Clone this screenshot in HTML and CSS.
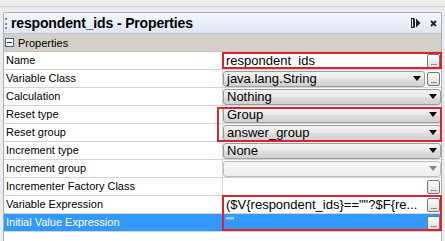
FILE: index.html
```html
<!DOCTYPE html>
<html lang="en">
<head>
    <meta charset="UTF-8">
    <meta name="viewport" content="width=device-width, initial-scale=1.0">
    <title>respondent_ids - Properties</title>
    <link rel="stylesheet" href="styles.css">
</head>
<body>

    <div class="topbar"></div>

    <div class="panel">
        <div class="titlebar">
            <span class="grip"></span>
            <span class="title">respondent_ids - Properties</span>
            <span class="tools">
                <svg class="dock" width="10" height="10" viewBox="0 0 10 10">
                    <rect x="0.5" y="0.5" width="2" height="9" fill="none" stroke="#222"/>
                    <rect x="3" y="0.5" width="1" height="9" fill="#222"/>
                    <path d="M5 0.5 L9.5 5 L5 9.5 Z" fill="#222"/>
                </svg>
                <svg class="close" width="7" height="7" viewBox="0 0 7 7">
                    <path d="M1 1 L6 6 M6 1 L1 6" stroke="#222" stroke-width="1.8"/>
                </svg>
            </span>
        </div>

        <div class="section">
            <span class="toggle"></span>
            Properties
        </div>

        <div class="rows">
            <div class="row">
                <div class="label">Name</div>
                <div class="value">
                    <div class="field">respondent_ids</div>
                    <span class="dots">...</span>
                </div>
            </div>
            <div class="row">
                <div class="label">Variable Class</div>
                <div class="value">
                    <div class="combo">java.lang.String<span class="arrow"></span></div>
                    <span class="dots">...</span>
                </div>
            </div>
            <div class="row">
                <div class="label">Calculation</div>
                <div class="value">
                    <div class="combo">Nothing<span class="arrow"></span></div>
                </div>
            </div>
            <div class="row">
                <div class="label">Reset type</div>
                <div class="value">
                    <div class="combo">Group<span class="arrow"></span></div>
                </div>
            </div>
            <div class="row">
                <div class="label">Reset group</div>
                <div class="value">
                    <div class="combo">answer_group<span class="arrow"></span></div>
                </div>
            </div>
            <div class="row">
                <div class="label">Increment type</div>
                <div class="value">
                    <div class="combo">None<span class="arrow"></span></div>
                </div>
            </div>
            <div class="row">
                <div class="label">Increment group</div>
                <div class="value">
                    <div class="combo disabled"><span class="arrow"></span></div>
                </div>
            </div>
            <div class="row">
                <div class="label">Incrementer Factory Class</div>
                <div class="value">
                    <div class="field"></div>
                    <span class="dots">...</span>
                </div>
            </div>
            <div class="row">
                <div class="label">Variable Expression</div>
                <div class="value">
                    <div class="field">($V{respondent_ids}==""?$F{re...</div>
                    <span class="dots">...</span>
                </div>
            </div>
            <div class="row selected">
                <div class="label">Initial Value Expression</div>
                <div class="value">
                    <div class="field small">""</div>
                    <span class="dots">...</span>
                </div>
            </div>
        </div>

        <!-- annotation boxes -->
        <div class="mark mark-name"></div>
        <div class="mark mark-reset"></div>
        <div class="mark mark-expr"></div>
    </div>

</body>
</html>
```

FILE: styles.css
```css
body {
    margin: 0;
    background-color: #ececec;
    font-family: "Liberation Sans", Arial, sans-serif;
    height: 241px;
    overflow: hidden;
}

.topbar {
    height: 6px;
    background: #eeeeee;
    border-bottom: 1px solid #d2d2d2;
    margin-bottom: 5px;
}

.panel {
    position: relative;
    margin: 0 3px;
    height: 240px;
    background: #fff;
    border: 1px solid #a3aec2;
    border-bottom: none;
    border-radius: 3px 3px 0 0;
}

.titlebar {
    display: flex;
    align-items: center;
    height: 20px;
    background: linear-gradient(#f4f7fc, #dfe6f4);
    border-bottom: 1px solid #b9c3d5;
    border-radius: 2px 2px 0 0;
}

.grip {
    width: 0;
    height: 11px;
    margin-left: 1px;
    border-left: 2px dotted #7d8797;
}

.title {
    margin-left: 4px;
    font-size: 14px;
    font-weight: bold;
    letter-spacing: -0.15px;
    color: #000;
}

.tools {
    margin-left: auto;
    display: flex;
    align-items: center;
    gap: 9px;
    margin-right: 4px;
}

.section {
    display: flex;
    align-items: center;
    height: 17px;
    background: #d4d0c8;
    border-bottom: 1px solid #c4c0b8;
    font-size: 11px;
    color: #000;
}

.toggle {
    position: relative;
    width: 9px;
    height: 9px;
    box-sizing: border-box;
    margin: 0 4px 0 1px;
    background: #fff;
    border: 1px solid #4f5f7f;
}

.toggle::after {
    content: "";
    position: absolute;
    left: 1px;
    top: 3px;
    width: 5px;
    height: 1px;
    background: #1c2b50;
}

.row {
    display: grid;
    grid-template-columns: 219px 1fr;
    height: 18px;
    box-sizing: border-box;
    border-bottom: 1px solid #d6d3ce;
}

.label {
    font-size: 11px;
    line-height: 17px;
    padding-left: 2px;
    border-right: 1px solid #d6d3ce;
    color: #000;
    white-space: nowrap;
}

.value {
    display: flex;
    align-items: center;
    gap: 2px;
    min-width: 0;
}

.field {
    flex: 1;
    min-width: 0;
    padding-left: 3px;
    font-size: 13px;
    line-height: 17px;
    white-space: nowrap;
    overflow: hidden;
    color: #000;
}

.field.small {
    font-size: 11px;
    line-height: 11px;
    align-self: flex-start;
    padding-top: 2px;
}

.combo {
    flex: 1;
    display: flex;
    align-items: center;
    height: 16px;
    box-sizing: border-box;
    padding: 0 3px 0 3px;
    border: 1px solid #9c9c9c;
    border-radius: 3px;
    background: linear-gradient(#f3f3f3, #e9e9e9 45%, #dcdcdc 55%, #d1d1d1);
    font-size: 13px;
    color: #000;
    white-space: nowrap;
}

.combo.disabled {
    border-color: #bdbdbd;
    background: linear-gradient(#f8f8f8, #ececec);
}

.arrow {
    margin-left: auto;
    width: 0;
    height: 0;
    border-left: 4px solid transparent;
    border-right: 4px solid transparent;
    border-top: 5px solid #000;
}

.combo.disabled .arrow {
    border-top-color: #858585;
}

.dots {
    display: flex;
    justify-content: center;
    align-items: flex-end;
    width: 13px;
    height: 14px;
    box-sizing: border-box;
    margin-right: 1px;
    border: 1px solid #767676;
    border-radius: 2px;
    background: linear-gradient(#fefefe, #dedede);
    font-size: 9px;
    line-height: 9px;
    letter-spacing: -0.5px;
    color: #222;
}

.selected .label,
.selected .value {
    background: #3399ff;
    color: #fff;
}

.selected .field {
    color: #fff;
}

.mark {
    position: absolute;
    box-sizing: border-box;
    border: 2px solid #e0202a;
}

.mark-name {
    left: 218px;
    top: 39px;
    width: 220px;
    height: 17px;
}

.mark-reset {
    left: 213px;
    top: 94px;
    width: 225px;
    height: 35px;
}

.mark-expr {
    left: 218px;
    top: 182px;
    width: 220px;
    height: 36px;
}
```
